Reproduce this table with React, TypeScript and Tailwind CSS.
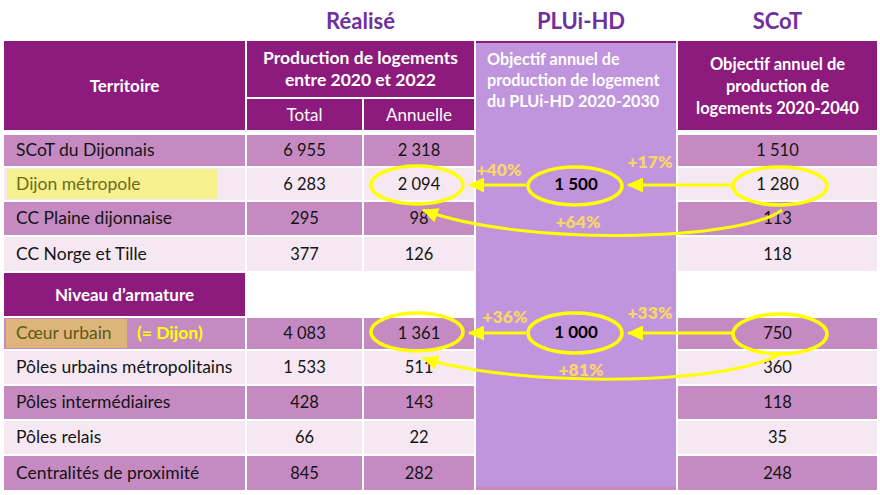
import React from 'react';

type Row = {
  label: string;
  total: string;
  an: string;
  scot: string;
  dark: boolean;
  r: string;
  hl?: 'yellow' | 'tan';
};

const rows: Row[] = [
  { label: 'SCoT du Dijonnais', total: '6 955', an: '2 318', scot: '1 510', dark: true, r: 'row-start-5' },
  { label: 'Dijon métropole', total: '6 283', an: '2 094', scot: '1 280', dark: false, r: 'row-start-6', hl: 'yellow' },
  { label: 'CC Plaine dijonnaise', total: '295', an: '98', scot: '113', dark: true, r: 'row-start-7' },
  { label: 'CC Norge et Tille', total: '377', an: '126', scot: '118', dark: false, r: 'row-start-8' },
  { label: 'Cœur urbain', total: '4 083', an: '1 361', scot: '750', dark: true, r: 'row-start-10', hl: 'tan' },
  { label: 'Pôles urbains métropolitains', total: '1 533', an: '511', scot: '360', dark: false, r: 'row-start-11' },
  { label: 'Pôles intermédiaires', total: '428', an: '143', scot: '118', dark: true, r: 'row-start-12' },
  { label: 'Pôles relais', total: '66', an: '22', scot: '35', dark: false, r: 'row-start-13' },
  { label: 'Centralités de proximité', total: '845', an: '282', scot: '248', dark: true, r: 'row-start-14' },
];

function Label({ row }: { row: Row }) {
  if (row.hl === 'yellow') {
    return (
      <div className="flex h-full items-center pl-[3px] py-[1px]">
        <div className="flex h-full w-[210px] items-center bg-[#f7f08e] pl-[9px] text-[#6b6b1c]">{row.label}</div>
      </div>
    );
  }
  if (row.hl === 'tan') {
    return (
      <div className="flex h-full items-center gap-[10px] pl-[2px] py-[1px]">
        <div className="flex h-full w-[121px] items-center bg-[#dcb47c] pl-[10px] text-[#5e5b14]">{row.label}</div>
        <span className="font-bold text-[#ffff00]">(= Dijon)</span>
      </div>
    );
  }
  return <div className="flex h-full items-center pl-3">{row.label}</div>;
}

export default function App() {
  return (
    <div className="relative h-[495px] w-[880px] overflow-hidden bg-white [font-family:Lato,sans-serif] text-[#141414]">
      <div className="grid grid-cols-[241px_115px_110px_200px_199px] grid-rows-[39px_56px_31px_1px_31px_32px_33px_34px_43px_31px_33px_33px_33px_34px] gap-[2px] pl-1 text-[16.5px]">
        {/* titles */}
        <div className="col-start-2 col-span-2 row-start-1 flex items-center justify-center pt-[2px] text-[22px] font-bold text-[#7030a0]">Réalisé</div>
        <div className="col-start-4 row-start-1 flex items-center justify-center pt-[2px] pl-[10px] text-[22px] font-bold text-[#7030a0]">PLUi-HD</div>
        <div className="col-start-5 row-start-1 flex items-center justify-center pt-[2px] text-[22px] font-bold text-[#7030a0]">SCoT</div>

        {/* header */}
        <div className="col-start-1 row-start-2 row-span-2 flex items-center justify-center bg-[#8c1b7d] text-[17px] font-bold text-white">Territoire</div>
        <div className="col-start-2 col-span-2 row-start-2 flex items-center justify-center bg-[#8c1b7d] text-center text-[17.5px] font-bold leading-[22px] text-white">
          Production de logements
          <br />
          entre 2020 et 2022
        </div>
        <div className="col-start-2 row-start-3 flex items-center justify-center bg-[#8c1b7d] text-[17px] text-white">Total</div>
        <div className="col-start-3 row-start-3 flex items-center justify-center bg-[#8c1b7d] text-[17px] text-white">Annuelle</div>
        <div className="col-start-5 row-start-2 row-span-2 flex items-center justify-center bg-[#8c1b7d] text-center text-[16.5px] font-bold leading-[22px] text-white">
          Objectif annuel de
          <br />
          production de
          <br />
          logements 2020-2040
        </div>

        {/* rows */}
        {rows.map((row) => {
          const bg = row.dark ? 'bg-[#c68ac3]' : 'bg-[#f5e8f3]';
          return (
            <React.Fragment key={row.label}>
              <div className={`col-start-1 ${row.r} ${bg} text-[17.5px]`}>
                <Label row={row} />
              </div>
              <div className={`col-start-2 ${row.r} ${bg} flex items-center justify-center`}>{row.total}</div>
              <div className={`col-start-3 ${row.r} ${bg} flex items-center justify-center`}>{row.an}</div>
              <div className={`col-start-4 ${row.r} ${bg}`} />
              <div className={`col-start-5 ${row.r} ${bg} flex items-center justify-center`}>{row.scot}</div>
            </React.Fragment>
          );
        })}

        <div className="col-start-1 row-start-9 flex items-center justify-center bg-[#8c1b7d] text-[17px] font-bold text-white">Niveau d’armature</div>

        {/* PLUi-HD column box */}
        <div className="z-10 col-start-4 row-start-2 row-end-15 mb-[4px] border-t-2 border-[#8c1b7d] bg-[#c095dd] pl-[11px] pt-[5px] text-[16.2px] font-bold leading-[21px] text-white">
          Objectif annuel de
          <br />
          production de logement
          <br />
          du PLUi-HD 2020-2030
        </div>
        <div className="z-20 col-start-4 row-start-6 flex items-center justify-center text-[17px] font-bold text-black">1 500</div>
        <div className="z-20 col-start-4 row-start-10 flex items-center justify-center pb-[4px] text-[17px] font-bold text-black">1 000</div>
      </div>

      {/* annotations */}
      <svg className="pointer-events-none absolute left-0 top-0 z-30" width="880" height="495" viewBox="0 0 880 495">
        <defs>
          <marker id="ah" markerUnits="userSpaceOnUse" markerWidth="16" markerHeight="15" viewBox="0 0 16 15" refX="15" refY="7.5" orient="auto">
            <path d="M0,0 L16,7.5 L0,15 z" fill="#ffff00" />
          </marker>
        </defs>
        <g fill="none" stroke="#ffff00" strokeWidth="3.5">
          <ellipse cx="417" cy="185" rx="46" ry="19" />
          <ellipse cx="575" cy="186" rx="47" ry="19" />
          <ellipse cx="780" cy="186" rx="47" ry="19" />
          <ellipse cx="417" cy="332" rx="46" ry="19" />
          <ellipse cx="575" cy="333" rx="47" ry="20" />
          <ellipse cx="780" cy="334" rx="47" ry="20" />
        </g>
        <g fill="none" stroke="#ffff00" strokeWidth="3">
          <path d="M731 185 L628 185" markerEnd="url(#ah)" />
          <path d="M526 185 L469 185" markerEnd="url(#ah)" />
          <path d="M782 210 C740 242 520 246 423 210" markerEnd="url(#ah)" />
          <path d="M732 333 L628 333" markerEnd="url(#ah)" />
          <path d="M526 333 L469 333" markerEnd="url(#ah)" />
          <path d="M782 352 C740 385 520 389 423 358" markerEnd="url(#ah)" />
        </g>
        <g fill="#f8d46c" fontFamily="Lato, sans-serif" fontWeight="800" fontSize="17.5" textAnchor="middle">
          <text x="499" y="176">+40%</text>
          <text x="650" y="168">+17%</text>
          <text x="578" y="228">+64%</text>
          <text x="505" y="323">+36%</text>
          <text x="650" y="319">+33%</text>
          <text x="581" y="376">+81%</text>
        </g>
      </svg>
    </div>
  );
}
